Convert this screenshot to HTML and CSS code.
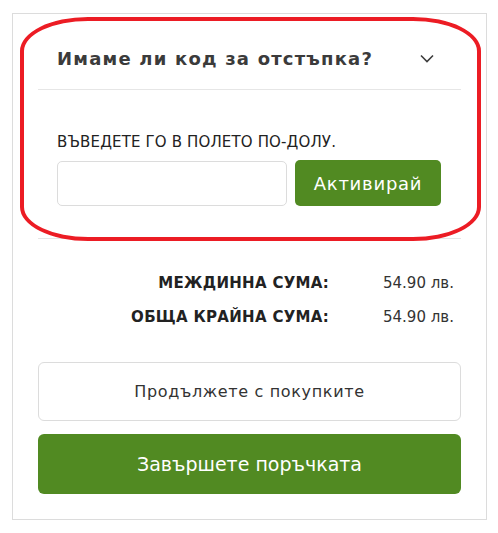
FILE: index.html
```html
<!DOCTYPE html>
<html lang="bg">
<head>
<meta charset="utf-8">
<link rel="stylesheet" href="styles.css">
</head>
<body>
<div class="page">
  <div class="cart-box">
    <section class="coupon">
      <div class="coupon-head">
        <h3 class="coupon-title">Имаме ли код за отстъпка?</h3>
        <svg class="chevron" width="14" height="9" viewBox="0 0 14 9"><polyline points="1,1.5 7,7.5 13,1.5" fill="none" stroke="#3d3d3d" stroke-width="1.6"/></svg>
      </div>
      <div class="coupon-body">
        <p class="coupon-label">Въведете го в полето по-долу.</p>
        <div class="coupon-row">
          <input class="coupon-input" type="text">
          <button class="btn-activate">Активирай</button>
        </div>
      </div>
    </section>
    <div class="totals">
      <div class="t-label">Междинна сума:</div><div class="t-value">54.90 лв.</div>
      <div class="t-label">Обща крайна сума:</div><div class="t-value">54.90 лв.</div>
    </div>
    <button class="btn-continue">Продължете с покупките</button>
    <button class="btn-checkout">Завършете поръчката</button>
  </div>
  <div class="annotation"></div>
</div>
</body>
</html>
```
FILE: styles.css
```css
* { box-sizing: border-box; }
body { margin: 0; background: #fff; font-family: "DejaVu Sans", "Open Sans", sans-serif; color: #222; }
.page { position: relative; width: 498px; height: 533px; padding: 13px 0 0 12px; }
.cart-box { width: 475px; border: 1px solid #dcdcdc; padding: 0 25px 25px 25px; }
.coupon-head { height: 76px; padding: 13px 27px 0 19px; display: flex; align-items: center; justify-content: space-between; border-bottom: 1px solid #e6e6e6; }
.coupon-title { margin: 0; font-size: 18px; font-weight: 700; color: #3b3b3b; letter-spacing: 1.2px; }
.chevron { display: block; }
.coupon-body { padding: 42px 20px 32px 19px; border-bottom: 1px solid #e6e6e6; }
.coupon-label { margin: 0 0 8px; font-size: 15px; line-height: 20px; letter-spacing: 0.15px; text-transform: uppercase; color: #222; }
.coupon-row { display: flex; gap: 8px; align-items: flex-end; }
.coupon-input { width: 230px; height: 45px; border: 1px solid #dcdcdc; border-radius: 5px; background: #fff; }
.btn-activate { width: 146px; height: 46px; border: 0; border-radius: 5px; background: #518a22; color: #fff; font-family: inherit; font-size: 18px; letter-spacing: 0.75px; }
.totals { display: grid; grid-template-columns: 1fr 78px; padding-top: 27px; margin-bottom: 28px; }
.t-label, .t-value { height: 34px; line-height: 34px; font-size: 15px; }
.t-label { text-align: right; padding-right: 54px; font-weight: 700; letter-spacing: 0.3px; text-transform: uppercase; color: #222; }
.t-value { color: #333; }
.btn-continue, .btn-checkout { display: block; width: 100%; font-family: inherit; border-radius: 6px; }
.btn-continue { height: 59px; background: #fff; border: 1px solid #dcdcdc; color: #333; font-size: 16px; letter-spacing: 0.65px; }
.btn-checkout { height: 60px; margin-top: 13px; background: #518a22; border: 0; color: #fff; font-size: 19px; }
.annotation { position: absolute; left: 20px; top: 17px; width: 461px; height: 224px; border: 4px solid #ec1c24; border-radius: 68px / 34px; pointer-events: none; }
```
